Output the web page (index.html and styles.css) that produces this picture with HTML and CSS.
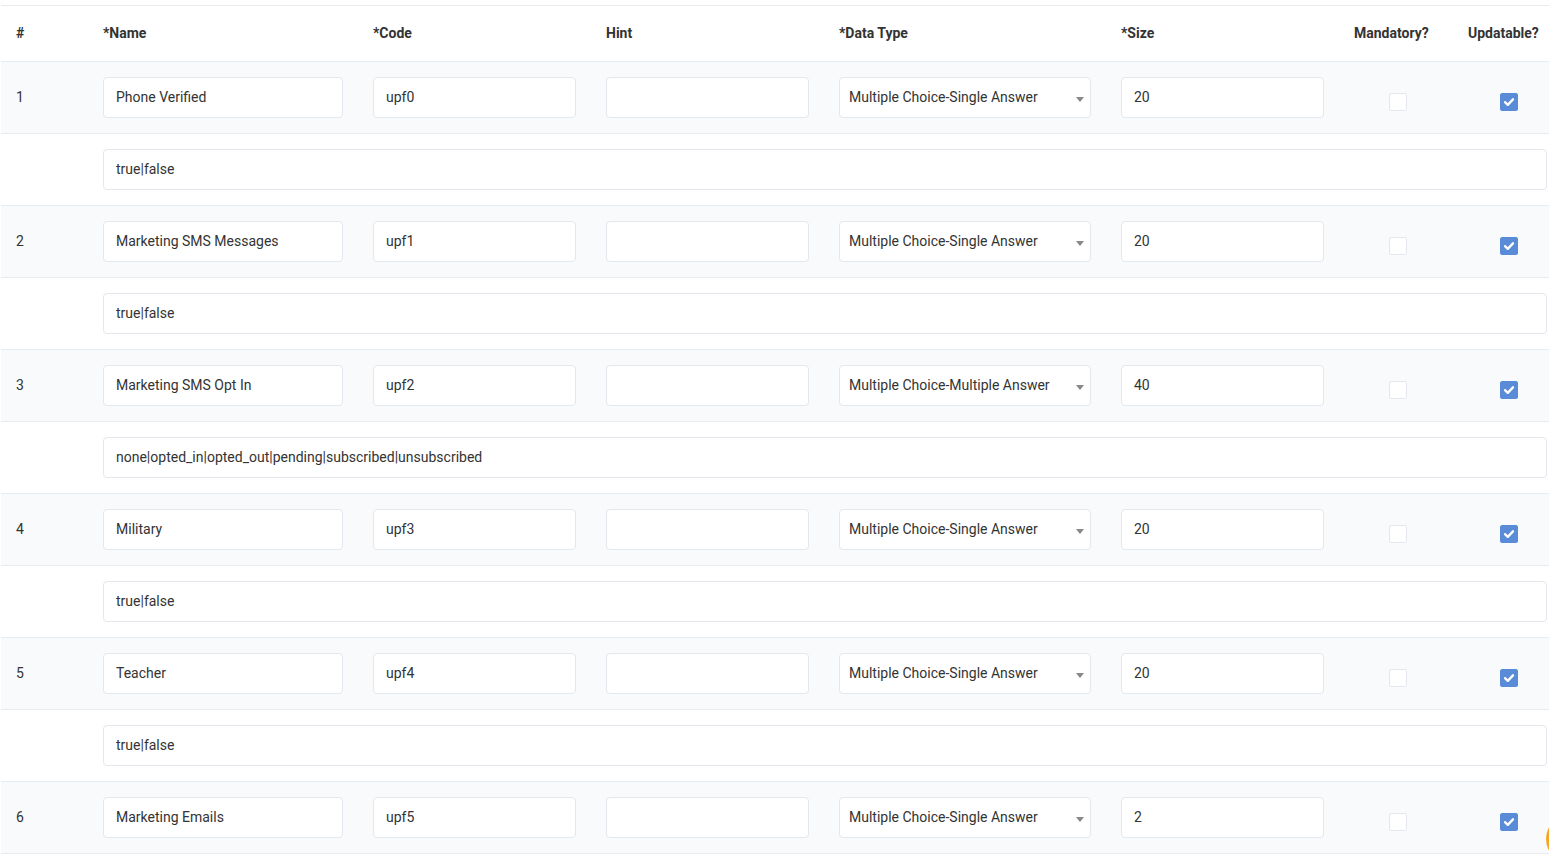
FILE: index.html
```html
<!DOCTYPE html>
<html>
<head>
	<title>Profile Fields</title>
	<meta charset="utf-8">
	<link rel="stylesheet" href="styles.css">
</head>
<body>

	<div class="fields">

		<div class="row head">
			<div class="cell num">#</div>
			<div class="cell">*Name</div>
			<div class="cell">*Code</div>
			<div class="cell">Hint</div>
			<div class="cell">*Data Type</div>
			<div class="cell">*Size</div>
			<div class="cell">Mandatory?</div>
			<div class="cell last">Updatable?</div>
		</div>

		<!-- 1 -->
		<div class="row main">
			<div class="cell num">1</div>
			<div class="cell"><input class="box" value="Phone Verified"></div>
			<div class="cell"><input class="box" value="upf0"></div>
			<div class="cell"><input class="box" value=""></div>
			<div class="cell"><div class="select">Multiple Choice-Single Answer</div></div>
			<div class="cell"><input class="box" value="20"></div>
			<div class="cell check"><span class="cb"></span></div>
			<div class="cell check"><span class="cb on"><svg viewBox="0 0 18 18"><path d="M4.5 9.2 L7.6 12.2 L13.5 6" /></svg></span></div>
		</div>
		<div class="row opts">
			<div class="cell num"></div>
			<div class="cell wide"><input class="box" value="true|false"></div>
		</div>

		<!-- 2 -->
		<div class="row main">
			<div class="cell num">2</div>
			<div class="cell"><input class="box" value="Marketing SMS Messages"></div>
			<div class="cell"><input class="box" value="upf1"></div>
			<div class="cell"><input class="box" value=""></div>
			<div class="cell"><div class="select">Multiple Choice-Single Answer</div></div>
			<div class="cell"><input class="box" value="20"></div>
			<div class="cell check"><span class="cb"></span></div>
			<div class="cell check"><span class="cb on"><svg viewBox="0 0 18 18"><path d="M4.5 9.2 L7.6 12.2 L13.5 6" /></svg></span></div>
		</div>
		<div class="row opts">
			<div class="cell num"></div>
			<div class="cell wide"><input class="box" value="true|false"></div>
		</div>

		<!-- 3 -->
		<div class="row main">
			<div class="cell num">3</div>
			<div class="cell"><input class="box" value="Marketing SMS Opt In"></div>
			<div class="cell"><input class="box" value="upf2"></div>
			<div class="cell"><input class="box" value=""></div>
			<div class="cell"><div class="select">Multiple Choice-Multiple Answer</div></div>
			<div class="cell"><input class="box" value="40"></div>
			<div class="cell check"><span class="cb"></span></div>
			<div class="cell check"><span class="cb on"><svg viewBox="0 0 18 18"><path d="M4.5 9.2 L7.6 12.2 L13.5 6" /></svg></span></div>
		</div>
		<div class="row opts">
			<div class="cell num"></div>
			<div class="cell wide"><input class="box" value="none|opted_in|opted_out|pending|subscribed|unsubscribed"></div>
		</div>

		<!-- 4 -->
		<div class="row main">
			<div class="cell num">4</div>
			<div class="cell"><input class="box" value="Military"></div>
			<div class="cell"><input class="box" value="upf3"></div>
			<div class="cell"><input class="box" value=""></div>
			<div class="cell"><div class="select">Multiple Choice-Single Answer</div></div>
			<div class="cell"><input class="box" value="20"></div>
			<div class="cell check"><span class="cb"></span></div>
			<div class="cell check"><span class="cb on"><svg viewBox="0 0 18 18"><path d="M4.5 9.2 L7.6 12.2 L13.5 6" /></svg></span></div>
		</div>
		<div class="row opts">
			<div class="cell num"></div>
			<div class="cell wide"><input class="box" value="true|false"></div>
		</div>

		<!-- 5 -->
		<div class="row main">
			<div class="cell num">5</div>
			<div class="cell"><input class="box" value="Teacher"></div>
			<div class="cell"><input class="box" value="upf4"></div>
			<div class="cell"><input class="box" value=""></div>
			<div class="cell"><div class="select">Multiple Choice-Single Answer</div></div>
			<div class="cell"><input class="box" value="20"></div>
			<div class="cell check"><span class="cb"></span></div>
			<div class="cell check"><span class="cb on"><svg viewBox="0 0 18 18"><path d="M4.5 9.2 L7.6 12.2 L13.5 6" /></svg></span></div>
		</div>
		<div class="row opts">
			<div class="cell num"></div>
			<div class="cell wide"><input class="box" value="true|false"></div>
		</div>

		<!-- 6 -->
		<div class="row main">
			<div class="cell num">6</div>
			<div class="cell"><input class="box" value="Marketing Emails"></div>
			<div class="cell"><input class="box" value="upf5"></div>
			<div class="cell"><input class="box" value=""></div>
			<div class="cell"><div class="select">Multiple Choice-Single Answer</div></div>
			<div class="cell"><input class="box" value="2"></div>
			<div class="cell check"><span class="cb"></span></div>
			<div class="cell check"><span class="cb on"><svg viewBox="0 0 18 18"><path d="M4.5 9.2 L7.6 12.2 L13.5 6" /></svg></span></div>
		</div>
		<div class="row opts">
			<div class="cell num"></div>
			<div class="cell wide"><input class="box" value="true|false"></div>
		</div>

	</div>

	<div class="fab"></div>

</body>
</html>
```

FILE: styles.css
```css
* {
	box-sizing: border-box;
}

html, body {
	margin: 0;
	overflow: hidden;
	background: #fff;
}

body {
	font-family: Roboto, "Liberation Sans", sans-serif;
	font-size: 14px;
	color: #333;
	padding-top: 5px;
}

.fields {
	width: 1561px;
	border-top: 1px solid #e8ebf0;
	margin-left: 1px;
}

.row {
	display: grid;
	grid-template-columns: 87px 270px 233px 233px 282px 233px 118px 104px;
	border-bottom: 1px solid #e8ebf0;
}

.row.head {
	height: 56px;
	font-weight: 700;
	color: #333;
}

.row.head .cell {
	display: flex;
	align-items: center;
	min-height: 0;
	padding: 0 15px 2px;
}

.row.head .last {
	padding-left: 11px;
}

.row.main {
	background: #f9fafc;
}

.row.opts {
	background: #fff;
}

.cell {
	padding: 15px;
	min-height: 71px;
}

.num {
	display: flex;
	align-items: center;
	padding-left: 15px;
	padding-bottom: 17px;
	color: #333;
}

.wide {
	grid-column: 2 / -1;
	padding-right: 14px;
}

.box {
	display: block;
	width: 100%;
	height: 41px;
	margin: 0;
	padding: 0 12px 2px;
	border: 1px solid #e4e7ed;
	border-radius: 4px;
	background: #fff;
	font-family: Roboto, "Liberation Sans", sans-serif;
	font-size: 14px;
	color: #333;
	outline: none;
}

.select {
	position: relative;
	height: 41px;
	line-height: 39px;
	padding: 0 10px 0 9px;
	border: 1px solid #e4e7ed;
	border-radius: 4px;
	background: #fff;
	color: #333;
	white-space: nowrap;
}

.select::after {
	content: "";
	position: absolute;
	right: 6px;
	top: 19px;
	border-left: 4px solid transparent;
	border-right: 4px solid transparent;
	border-top: 5px solid #888;
}

.check {
	display: flex;
	justify-content: center;
	padding-top: 31px;
}

.cb {
	display: block;
	width: 18px;
	height: 18px;
	border: 1px solid #e4e7ed;
	border-radius: 2px;
	background: #fff;
}

.cb.on {
	background: #5a8bd8;
	border-color: #5a8bd8;
}

.cb svg {
	display: block;
	width: 16px;
	height: 16px;
}

.cb path {
	fill: none;
	stroke: #fff;
	stroke-width: 2.6;
	stroke-linecap: round;
	stroke-linejoin: round;
}

.fab {
	position: fixed;
	left: 1546px;
	top: 814px;
	width: 50px;
	height: 50px;
	border-radius: 50%;
	background: #f5a623;
}
```
